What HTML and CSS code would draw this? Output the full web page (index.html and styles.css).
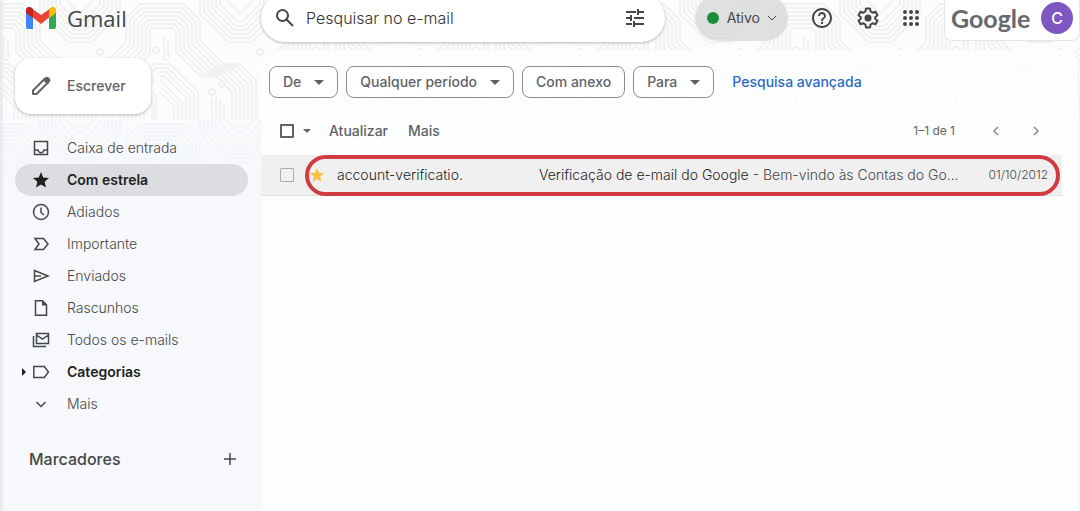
FILE: index.html
```html
<!DOCTYPE html>
<html lang="pt-BR">
<head>
<meta charset="utf-8">
<meta name="viewport" content="width=device-width, initial-scale=1">
<title>Gmail - Com estrela</title>
<link rel="stylesheet" href="styles.css">
</head>
<body>
<svg class="circuit" aria-hidden="true">
  <defs>
    <pattern id="traces" width="160" height="120" patternUnits="userSpaceOnUse">
      <g fill="none" stroke="#eceeef" stroke-width="1.500">
        <path d="M0 4h24l16 16v20l24 24h16l16 16v40M0 8h22l14 14v20l24 24h16l16 16v38M0 12h20l12 12v20l24 24h16l16 16v36M0 16h18l10 10v20l24 24h16l16 16v34M0 20h16l8 8v20l24 24h16l16 16v32M0 24h14l6 6v20l24 24h16l16 16v30M0 28h12l4 4v20l24 24h16l16 16v28"/>
        <path d="M40 0v14l28 28h24l28-28V0M44 0v12l26 26h20l26-26V0M48 0v10l24 24h16l24-24V0M52 0v8l22 22h12l22-22V0M56 0v6l20 20h8l20-20V0M60 0v4l18 18h4l18-18V0M66 0l14 14L94 0"/>
        <path d="M160 4h-20l-14 14v24l-20 20v22l14 14v22M160 8h-18l-12 12v24l-20 20v20l14 14v22M160 12h-16l-10 10v24l-20 20v18l14 14v22M160 16h-14l-8 8v24l-20 20v16l14 14v22M160 20h-12l-6 6v24l-20 20v14l14 14v22M160 24h-10l-4 4v24l-20 20v12l14 14v22M160 28h-8l-2 2v24l-20 20v10l14 14v22"/>
        <path d="M0 64h10l28 28v28M0 68h8l26 26v26M0 72h6l24 24v24M0 76h4l22 22v22M0 80l22 22v18M0 86l18 18v16M0 92l14 14v14M160 64h-6l-14 14v8l12 12v22M160 68h-4l-12 12v4l12 12v24M4 36v16M8 40v14M154 104v16M64 104v16M60 100v20M56 96v24M52 98v22"/>
        <circle cx="52" cy="92" r="3"/><circle cx="6" cy="57" r="3"/><circle cx="100" cy="52" r="3"/><circle cx="156" cy="50" r="3"/><circle cx="62" cy="84" r="3"/><circle cx="150" cy="80" r="3"/>
      </g>
    </pattern>
  </defs>
  <rect width="100%" height="100%" fill="url(#traces)"/>
</svg>

<div class="app">
  <header class="header">
    <a class="brand" href="#">
      <svg class="brand-mark" viewBox="0 0 30 22" aria-hidden="true">
        <path fill="#4285f4" d="M0 5h7v17H2a2 2 0 0 1-2-2z"/>
        <path fill="#34a853" d="M23 5h7v15a2 2 0 0 1-2 2h-5z"/>
        <path fill="#ea4335" d="M5 1l10 7 10-7v8l-10 8L5 9z"/>
        <path fill="#c5221f" d="M0 3c0-3 3-4 6-2l1 1v9L0 6z"/>
        <path fill="#fbbc04" d="M30 3c0-3-3-4-6-2l-1 1v9l7-5z"/>
      </svg>
      <span>Gmail</span>
    </a>
    <form class="search">
      <button class="icon-btn" type="button" aria-label="Pesquisar">
        <svg width="20" height="20" viewBox="0 0 20 20" fill="none" stroke="currentColor" stroke-width="2"><circle cx="7.500" cy="7.500" r="5.500"/><path d="M11.500 11.500L18 18"/></svg>
      </button>
      <input class="search-input" type="text" aria-label="Pesquisar no e-mail" placeholder="Pesquisar no e-mail">
      <button class="icon-btn" type="button" aria-label="Opções de pesquisa">
        <svg width="20" height="20" viewBox="0 0 20 20" fill="none" stroke="currentColor" stroke-width="2"><path d="M1 4h10M13 1v6M13 4h6M1 10h5M6 7v6M9 10h10M1 16h6M9 13v6M9 16h10"/></svg>
      </button>
    </form>
    <div class="tools">
      <button class="status" type="button"><span class="status-dot"></span>Ativo
        <svg width="8" height="6" viewBox="0 0 8 6" fill="none" stroke="currentColor"><path d="M0 1l4 4 4-4"/></svg>
      </button>
      <button class="icon-btn" type="button" aria-label="Ajuda">
        <svg width="24" height="24" viewBox="0 0 24 24" fill="currentColor"><path d="M11 18h2v-2h-2v2zm1-16C6.480 2 2 6.480 2 12s4.480 10 10 10 10-4.480 10-10S17.520 2 12 2zm0 18c-4.410 0-8-3.590-8-8s3.590-8 8-8 8 3.590 8 8-3.590 8-8 8zm0-14c-2.210 0-4 1.790-4 4h2c0-1.100.900-2 2-2s2 .900 2 2c0 2-3 1.750-3 5h2c0-2.250 3-2.500 3-5 0-2.210-1.790-4-4-4z"/></svg>
      </button>
      <button class="icon-btn" type="button" aria-label="Configurações">
        <svg width="24" height="24" viewBox="0 0 24 24" fill="none" stroke="currentColor" stroke-width="2" stroke-linejoin="round"><path d="M10 2.500h4l.6 3 2 1.200 2.900-1 2 3.500-2.300 2v1.600l2.300 2-2 3.500-2.900-1-2 1.200-.6 3h-4l-.6-3-2-1.200-2.900 1-2-3.500 2.300-2v-1.600l-2.300-2 2-3.500 2.900 1 2-1.200z"/><circle cx="12" cy="12" r="2.500" fill="currentColor"/></svg>
      </button>
      <button class="icon-btn" type="button" aria-label="Google Apps">
        <svg width="18" height="18" viewBox="0 0 18 18" fill="currentColor"><circle cx="3" cy="3" r="2"/><circle cx="9" cy="3" r="2"/><circle cx="15" cy="3" r="2"/><circle cx="3" cy="9" r="2"/><circle cx="9" cy="9" r="2"/><circle cx="15" cy="9" r="2"/><circle cx="3" cy="15" r="2"/><circle cx="9" cy="15" r="2"/><circle cx="15" cy="15" r="2"/></svg>
      </button>
    </div>
    <div class="account">
      <span class="google">Google</span>
      <button class="avatar" type="button" aria-label="Conta do Google">C</button>
    </div>
  </header>

  <aside class="sidebar">
    <button class="compose" type="button">
      <svg width="20" height="20" viewBox="0 0 20 20" fill="none" stroke="currentColor" stroke-width="2" stroke-linejoin="round"><path d="M2 18v-3.500L13 3.500l3.500 3.500L5.500 18z"/><path fill="currentColor" d="M13 3.500L15 2q1-.7 2 .2l1 1q.8 1 0 2L16.500 7z"/></svg>
      Escrever
    </button>
    <nav class="nav">
      <a class="nav-item" href="#"><svg class="nav-icon" viewBox="0 0 18 18"><path d="M2.500 2.500h13v13h-13zM2.500 11H6c.5 3.500 5.500 3.500 6 0h3.500"/></svg>Caixa de entrada</a>
      <a class="nav-item active" href="#"><svg class="nav-icon solid" viewBox="0 0 18 18"><path d="M9 1l2.200 5.400 5.800.5-4.400 3.800L14 16.500l-5-3.100-5 3.100 1.400-5.800L1 6.900l5.800-.5z"/></svg>Com estrela</a>
      <a class="nav-item" href="#"><svg class="nav-icon" viewBox="0 0 18 18"><circle cx="9" cy="9" r="7.500"/><path d="M9 4.500V9.500l3 2.500"/></svg>Adiados</a>
      <a class="nav-item" href="#"><svg class="nav-icon" viewBox="0 0 18 18"><path d="M3 3.500h8.500L16 9l-4.500 5.500H3L7 9z"/></svg>Importante</a>
      <a class="nav-item" href="#"><svg class="nav-icon" viewBox="0 0 18 18"><path d="M2.500 3.500L16 9 2.500 14.500zM3 9h6"/></svg>Enviados</a>
      <a class="nav-item" href="#"><svg class="nav-icon" viewBox="0 0 18 18"><path d="M3.500 1.800h7l4 4v10.500h-11z"/><path class="fold" d="M10 1.500v5h5z"/></svg>Rascunhos</a>
      <a class="nav-item" href="#"><svg class="nav-icon" viewBox="0 0 18 18"><path d="M4.500 2.500h12v10h-12zM4.500 4l6 4 6-4M1.500 5v10.500H14"/></svg>Todos os e-mails</a>
      <a class="nav-item strong" href="#"><svg class="expand" viewBox="0 0 4 8"><path d="M0 0l4 4-4 4z"/></svg><svg class="nav-icon" viewBox="0 0 18 18"><path d="M1.800 3.500h10.500L16.500 9l-4.200 5.500H1.800z"/></svg>Categorias</a>
      <a class="nav-item" href="#"><svg class="nav-icon" viewBox="0 0 18 18"><path d="M4.500 7L9 11.500 13.500 7"/></svg>Mais</a>
    </nav>
    <div class="labels">
      <h2>Marcadores</h2>
      <button class="icon-btn" type="button" aria-label="Criar novo marcador"><svg width="14" height="14" viewBox="0 0 14 14" fill="none" stroke="currentColor" stroke-width="1.500"><path d="M7 1v12M1 7h12"/></svg></button>
    </div>
  </aside>

  <main class="panel">
    <div class="filters">
      <button class="chip" type="button">De<span class="caret"></span></button>
      <button class="chip" type="button">Qualquer período<span class="caret"></span></button>
      <button class="chip" type="button">Com anexo</button>
      <button class="chip" type="button">Para<span class="caret"></span></button>
      <a class="advanced" href="#">Pesquisa avançada</a>
    </div>
    <div class="toolbar">
      <input class="check" type="checkbox" aria-label="Selecionar tudo">
      <span class="caret small"></span>
      <button class="text-btn" type="button">Atualizar</button>
      <button class="text-btn" type="button">Mais</button>
      <span class="count">1–1 de 1</span>
      <button class="icon-btn pager" type="button" aria-label="Anterior"><svg width="8" height="10" viewBox="0 0 8 10" fill="none" stroke="currentColor" stroke-width="1.500"><path d="M6 1L2 5l4 4"/></svg></button>
      <button class="icon-btn pager" type="button" aria-label="Próxima"><svg width="8" height="10" viewBox="0 0 8 10" fill="none" stroke="currentColor" stroke-width="1.500"><path d="M2 1l4 4-4 4"/></svg></button>
    </div>
    <div class="mail">
      <input class="check light" type="checkbox" aria-label="Selecionar mensagem">
      <div class="mail-focus">
        <button class="icon-btn star" type="button" aria-label="Com estrela"><svg width="16" height="16" viewBox="0 0 18 18" fill="currentColor"><path d="M9 1l2.200 5.400 5.800.5-4.400 3.800L14 16.500l-5-3.100-5 3.100 1.400-5.800L1 6.900l5.800-.5z"/></svg></button>
        <span class="sender">account-verificatio.</span>
        <span class="subject">Verificação de e-mail do Google <span class="snippet">- Bem-vindo às Contas do Go...</span></span>
        <time class="date" datetime="2012-10-01">01/10/2012</time>
      </div>
    </div>
  </main>
</div>
</body>
</html>
```

FILE: styles.css
```css
* {
  box-sizing: border-box;
}

body {
  margin: 0;
  min-height: 100vh;
  overflow: hidden;
  background: #f6f8fc;
  color: #444746;
  font: 14px/20px Inter, Roboto, sans-serif;
}

button,
input {
  margin: 0;
  padding: 0;
  border: 0;
  background: none;
  color: inherit;
  font: inherit;
}

a {
  color: inherit;
  text-decoration: none;
}

svg {
  display: block;
  flex: none;
}

.circuit {
  position: absolute;
  top: 0;
  left: 0;
  width: 100%;
  height: 180px;
  background: #fcfcfd;
  mask-image: linear-gradient(#000 50%, transparent);
}

.app {
  position: relative;
  display: grid;
  grid-template-columns: 258px minmax(0, 1fr);
  grid-template-rows: 50px 1fr;
  min-height: 100vh;
  border-left: 3px solid #e9ebef;
}

.header {
  grid-column: 1 / -1;
  display: flex;
  align-items: center;
  height: 36px;
}

.brand {
  display: flex;
  align-items: center;
  gap: 11px;
  width: 258px;
  flex: none;
  padding-left: 23px;
  font: 22px/28px "Open Sans", sans-serif;
}

.brand-mark {
  width: 30px;
  height: 22px;
}

.search {
  display: flex;
  align-items: center;
  gap: 11px;
  flex: 1;
  height: 48px;
  padding: 0 20px 0 14px;
  border-radius: 24px;
  background: #fff;
  box-shadow: 0 1px 3px #b4b6b9;
}

.search-input {
  flex: 1;
  min-width: 0;
  font-size: 16px;
  font-weight: 300;
}

.search-input::placeholder {
  color: #333;
  opacity: 1;
}

.icon-btn {
  display: grid;
  place-items: center;
  flex: none;
}

.tools {
  display: flex;
  align-items: center;
  gap: 22px;
  padding: 0 24px 0 30px;
}

.status {
  display: flex;
  align-items: center;
  gap: 8px;
  height: 46px;
  padding: 0 12px;
  border-radius: 23px;
  background: #d8d9dacc;
}

.status-dot {
  width: 12px;
  height: 12px;
  border-radius: 50%;
  background: #1e8e3e;
}

.account {
  display: flex;
  align-items: center;
  justify-content: space-between;
  width: 136px;
  height: 46px;
  padding: 0 6px;
  border: 1px solid #e3e5e8;
  border-radius: 8px;
  background: #fff;
}

.google {
  color: #66696d;
  font: 700 25px/32px Lato, sans-serif;
}

.avatar {
  width: 32px;
  height: 32px;
  border-radius: 50%;
  background: #7e57c2;
  color: #fff;
  font-size: 16px;
  font-weight: 500;
}

.sidebar {
  padding: 8px 13px 0 12px;
}

.compose {
  display: flex;
  align-items: center;
  gap: 16px;
  height: 56px;
  padding: 0 25px 0 16px;
  border-radius: 16px;
  background: #fff;
  box-shadow: 0 1px 3px #b4b6b9;
  color: #5f6368;
  font-weight: 500;
}

.nav {
  padding-top: 18px;
  font-weight: 300;
}

.nav-item {
  position: relative;
  display: flex;
  align-items: center;
  gap: 17px;
  height: 32px;
  padding-left: 17px;
  border-radius: 16px;
}

.active {
  background: #dcdde0;
}

.active,
.strong {
  color: #1f1f1f;
  font-weight: 600;
}

.nav-icon {
  width: 18px;
  height: 18px;
  fill: none;
  stroke: #444746;
  stroke-width: 1.5;
}

.solid {
  fill: #1f1f1f;
  stroke: none;
}

.fold {
  fill: #444746;
  stroke: none;
}

.expand {
  position: absolute;
  left: 7px;
  width: 4px;
  height: 8px;
  fill: #1f1f1f;
}

.labels {
  display: flex;
  align-items: center;
  justify-content: space-between;
  padding: 29px 11px 0 14px;
}

.labels h2 {
  margin: 0;
  font-size: 16px;
  line-height: 20px;
  font-weight: 500;
}

.panel {
  margin-right: 2px;
  padding-right: 16px;
  border-radius: 16px 16px 0 0;
  background: #fefefed9;
}

.filters {
  display: flex;
  align-items: center;
  gap: 8px;
  padding: 16px 8px 0;
}

.chip {
  display: flex;
  align-items: center;
  gap: 13px;
  height: 32px;
  padding: 0 13px;
  border: 1px solid #8a8c8e;
  border-radius: 8px;
  background: #fff;
  color: #5f6368;
  font-weight: 500;
}

.caret {
  border: 5px solid transparent;
  border-top-color: currentColor;
  border-bottom: 0;
}

.small {
  border-width: 4px;
  border-bottom: 0;
}

.advanced {
  padding-left: 10px;
  color: #2b6cc4;
  font-weight: 500;
}

.toolbar {
  display: flex;
  align-items: center;
  height: 57px;
  padding: 8px 22px 0 19px;
  color: #5f6368;
}

.check {
  appearance: none;
  width: 14px;
  height: 14px;
  flex: none;
  border: 2px solid #5f6368;
  border-radius: 1px;
  background: #fff;
}

.light {
  border: 1px solid #a9abad;
  background: none;
}

.toolbar .caret {
  margin: 0 18px 0 9px;
}

.text-btn {
  margin-right: 20px;
  font-weight: 500;
}

.count {
  margin-left: auto;
  font-size: 12px;
}

.pager {
  width: 8px;
  margin-left: 32px;
  color: #8b8e91;
}

.count + .pager {
  margin-left: 37px;
}

.mail {
  display: flex;
  align-items: center;
  gap: 11px;
  height: 40px;
  padding: 0 2px 0 19px;
  background: #f0f0f1;
  box-shadow: 0 1px #dfe0e1;
}

.mail-focus {
  display: grid;
  grid-template-columns: 16px 190px minmax(0, 1fr) auto;
  align-items: center;
  column-gap: 12px;
  flex: 1;
  min-width: 0;
  height: 41px;
  padding: 0 8px 0 0;
  border: 4px solid #d13c40;
  border-radius: 21px;
  color: #1f1f1f;
  font-weight: 300;
}

.star {
  color: #f5c242;
}

.subject {
  overflow: hidden;
  white-space: nowrap;
}

.snippet {
  color: #444746;
}

.date {
  color: #444746;
  font-size: 12px;
}
```
